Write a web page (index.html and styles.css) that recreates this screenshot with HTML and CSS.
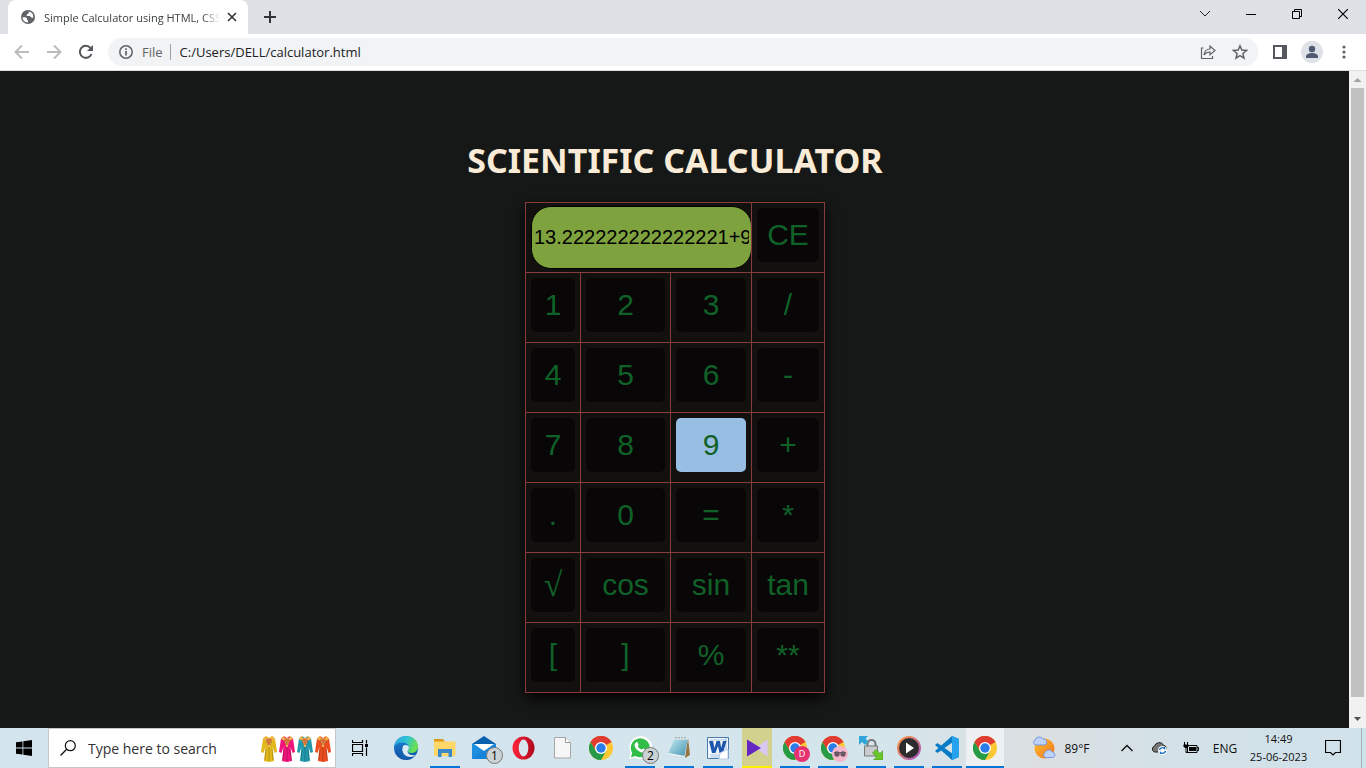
FILE: index.html
```html
<!DOCTYPE html>
<html lang="en">
<head>
<meta charset="utf-8">
<title>Simple Calculator using HTML, CSS</title>
<link rel="stylesheet" href="styles.css">
</head>
<body>
<svg class="defs" aria-hidden="true">
  <defs>
    <linearGradient id="edgeA" x1="0" y1="0" x2="1" y2="0.3"><stop offset="0" stop-color="#2aa4e4"/><stop offset="0.55" stop-color="#2fc3d0"/><stop offset="1" stop-color="#6be04e"/></linearGradient>
    <linearGradient id="edgeB" x1="0" y1="0" x2="0" y2="1"><stop offset="0" stop-color="#1b8ee0"/><stop offset="1" stop-color="#114a9c"/></linearGradient>
    <linearGradient id="ring" x1="0" y1="0" x2="1" y2="1"><stop offset="0" stop-color="#ff9838"/><stop offset="1" stop-color="#a352c8"/></linearGradient>
    <linearGradient id="opera" x1="0" y1="0" x2="1" y2="0"><stop offset="0" stop-color="#ff2338"/><stop offset="1" stop-color="#ad0b1c"/></linearGradient>
    <linearGradient id="sun" x1="0" y1="0" x2="1" y2="1"><stop offset="0" stop-color="#ffc12e"/><stop offset="1" stop-color="#f0701c"/></linearGradient>
    <linearGradient id="note" x1="0" y1="0" x2="1" y2="1"><stop offset="0" stop-color="#c9eef6"/><stop offset="1" stop-color="#3f8fae"/></linearGradient>
    <symbol id="chrome" viewBox="0 0 24 24">
      <circle cx="12" cy="12" r="12" fill="#fcc934"/>
      <path d="M12 12L1.6 6A12 12 0 0 1 22.4 6z" fill="#e03c31"/>
      <path d="M12 6h10.4A12 12 0 0 0 1.6 6L7 15z" fill="#e03c31"/>
      <path d="M1.6 6A12 12 0 0 0 12 24l5.2-9L12 17 6.8 15z" fill="#259b48"/>
      <circle cx="12" cy="12" r="6" fill="#fff"/><circle cx="12" cy="12" r="4.7" fill="#2b7de9"/>
    </symbol>
    <symbol id="coat" viewBox="0 0 18 27">
      <path d="M6 1L3 3.500 1 17l2.500 1 2-6L4 26l5 1 5-1-1.500-14 2 6 2.500-1L15 3.500 12 1l-3 2z"/>
      <path d="M9 3v23M6 14l-1 11M12 14l1 11" stroke="#0003" fill="none"/>
      <path d="M6 1L3.500 4l2.500 1zM12 1l2.500 3-2.500 1zM6 3l3 9 3-9" stroke="#f5bb54" stroke-width="1" fill="#e8983e"/>
      <path d="M6 5h6M6 7h6M7 9h4" stroke="#b75436" stroke-width="1"/>
    </symbol>
  </defs>
</svg>
<div class="screen">
  <header class="tabstrip">
    <div class="tab">
      <svg class="favicon" viewBox="0 0 14 14"><circle cx="7" cy="7" r="7" fill="#5f6368"/><path d="M1.5 7.2h3l1.6 1.3v1.3l1 .9-.3 1.7C3.500 12.500 1.500 10 1.500 7.200zM6.200 1.500l1.500.5v1.300L6 4.300 5.600 6h3.200l1.500 1.500 1.900.3c.8-3.400-1.700-6.300-6-6.300z" fill="#fff"/></svg>
      <span class="tab-title">Simple Calculator using HTML, CSS</span>
      <button class="icon-btn tab-close" aria-label="Close tab"><svg width="10" height="10" viewBox="0 0 10 10"><path d="M1 1l8 8M9 1L1 9" stroke="#303338" stroke-width="1.600"/></svg></button>
    </div>
    <button class="icon-btn new-tab" aria-label="New tab"><svg width="12" height="12" viewBox="0 0 12 12"><path d="M6 0v12M0 6h12" stroke="#303338" stroke-width="2"/></svg></button>
    <div class="window-controls">
      <button class="icon-btn" aria-label="Search tabs"><svg width="12" height="12" viewBox="0 0 12 12"><path d="M1 3l5 5 5-5" fill="none" stroke="#222"/></svg></button>
      <button class="icon-btn" aria-label="Minimize"><svg width="10" height="10" viewBox="0 0 10 10"><path d="M0 5.500h10" stroke="#000"/></svg></button>
      <button class="icon-btn" aria-label="Restore"><svg width="10" height="10" viewBox="0 0 10 10"><path d="M.5 2.500h7v7h-7zM2.500 2.500v-2h7v7h-2" fill="none" stroke="#000"/></svg></button>
      <button class="icon-btn" aria-label="Close"><svg width="10" height="10" viewBox="0 0 10 10"><path d="M0 0l10 10M10 0L0 10" stroke="#000" stroke-width="1.200"/></svg></button>
    </div>
  </header>
  <nav class="toolbar">
    <button class="icon-btn nav-btn" aria-label="Back"><svg width="16" height="16" viewBox="0 0 16 16"><path d="M15 8H2M8 1.500L1.500 8 8 14.500" fill="none" stroke="#babcbe" stroke-width="2"/></svg></button>
    <button class="icon-btn nav-btn" aria-label="Forward"><svg width="16" height="16" viewBox="0 0 16 16"><path d="M1 8h13M8 1.500L14.500 8 8 14.500" fill="none" stroke="#babcbe" stroke-width="2"/></svg></button>
    <button class="icon-btn nav-btn" aria-label="Reload"><svg width="16" height="16" viewBox="0 0 16 16"><path d="M13.500 10A6 6 0 1 1 12.500 4" fill="none" stroke="#55595e" stroke-width="2"/><path d="M15 1v6H9z" fill="#55595e"/></svg></button>
    <div class="omnibox">
      <svg width="14" height="14" viewBox="0 0 14 14"><circle cx="7" cy="7" r="6.200" fill="none" stroke="#5f6368" stroke-width="1.500"/><path d="M7 6v4.500M7 3.200v1.700" stroke="#5f6368" stroke-width="1.700"/></svg>
      <span class="scheme">File</span>
      <input class="address" type="text" aria-label="Address" value="C:/Users/DELL/calculator.html">
      <button class="icon-btn omni-btn" aria-label="Share"><svg width="16" height="16" viewBox="0 0 16 16"><path d="M3.500 4H1.500v10.500h11V12M4 11c.5-4 2.500-6 6-6V2l5 4.500-5 4.300V8c-3 0-4.500.8-6 3z" fill="none" stroke="#5f6368" stroke-width="1.200"/></svg></button>
      <button class="icon-btn omni-btn" aria-label="Bookmark"><svg width="16" height="16" viewBox="0 0 16 16"><path d="M8 1.800l1.800 4.300 4.700.4-3.600 3 1.100 4.600L8 11.700l-4 2.400 1.100-4.600-3.600-3 4.700-.4z" fill="none" stroke="#5f6368" stroke-width="1.500"/></svg></button>
    </div>
    <button class="icon-btn side-btn" aria-label="Side panel"><svg width="14" height="14" viewBox="0 0 14 14"><path d="M1 1h12v12H1z" fill="none" stroke="#55595e" stroke-width="2"/><path d="M9 0h5v14H9z" fill="#55595e"/></svg></button>
    <button class="icon-btn side-btn" aria-label="Profile"><svg width="22" height="22" viewBox="0 0 22 22"><circle cx="11" cy="11" r="11" fill="#dee1e6"/><circle cx="11" cy="8" r="3.200" fill="#4f5b70"/><path d="M5 17v-1.500c0-2.300 3-3.500 6-3.500s6 1.200 6 3.500V17z" fill="#4f5b70"/></svg></button>
    <button class="icon-btn side-btn" aria-label="Menu"><svg width="4" height="14" viewBox="0 0 4 14"><g fill="#5f6368"><circle cx="2" cy="2" r="1.600"/><circle cx="2" cy="7" r="1.600"/><circle cx="2" cy="12" r="1.600"/></g></svg></button>
  </nav>
  <div class="viewport">
    <main class="page">
      <h1>SCIENTIFIC CALCULATOR</h1>
      <table class="calculator">
        <colgroup><col class="c1"><col class="c2"><col class="c3"><col class="c4"></colgroup>
        <tbody>
        <tr><td colspan="3" class="display-cell"><input class="display" type="text" aria-label="Result" value="13.222222222222221+9"></td><td><button class="key">CE</button></td></tr>
        <tr><td><button class="key">1</button></td><td><button class="key">2</button></td><td><button class="key">3</button></td><td><button class="key">/</button></td></tr>
        <tr><td><button class="key">4</button></td><td><button class="key">5</button></td><td><button class="key">6</button></td><td><button class="key">-</button></td></tr>
        <tr><td><button class="key">7</button></td><td><button class="key">8</button></td><td><button class="key active">9</button></td><td><button class="key">+</button></td></tr>
        <tr><td><button class="key">.</button></td><td><button class="key">0</button></td><td><button class="key">=</button></td><td><button class="key">*</button></td></tr>
        <tr><td><button class="key root">√</button></td><td><button class="key">cos</button></td><td><button class="key">sin</button></td><td><button class="key">tan</button></td></tr>
        <tr><td><button class="key">[</button></td><td><button class="key">]</button></td><td><button class="key">%</button></td><td><button class="key">**</button></td></tr>
        </tbody>
      </table>
    </main>
    <div class="scrollbar" aria-hidden="true">
      <svg class="arrow" viewBox="0 0 17 17"><path d="M4.500 11L8.500 7l4 4z" fill="#a3a3a3"/></svg>
      <div class="thumb"></div>
      <svg class="arrow" viewBox="0 0 17 17"><path d="M5 6l3.500 4L12 6z" fill="#505050"/></svg>
    </div>
  </div>
  <footer class="taskbar">
    <button class="icon-btn start" aria-label="Start"><svg width="16" height="16" viewBox="0 0 16 16"><path d="M0 2.300L6.500 1.400v6.100H0zM7.300 1.300L16 0v7.500H7.300zM0 8.400h6.500v6.200L0 13.700zM7.300 8.400H16V16l-8.700-1.200z"/></svg></button>
    <label class="search">
      <svg width="16" height="16" viewBox="0 0 16 16"><circle cx="10.300" cy="5.700" r="5" fill="none" stroke="#111" stroke-width="1.200"/><path d="M6.700 9.300L.5 15.500" stroke="#111" stroke-width="1.300"/></svg>
      <input type="text" aria-label="Search" placeholder="Type here to search">
      <svg width="72" height="27" viewBox="0 0 72 27"><use href="#coat" width="18" height="27" fill="#e2b91c"/><use href="#coat" x="18" width="18" height="27" fill="#f0147c"/><use href="#coat" x="36" width="18" height="27" fill="#2298ac"/><use href="#coat" x="54" width="18" height="27" fill="#ec4d1e"/></svg>
    </label>
    <button class="icon-btn start" aria-label="Task view"><svg width="16" height="16" viewBox="0 0 16 16"><path d="M.5 0v2.500h10V0M.5 16v-2.500h10V16M.5 4.500h10v7H.5zM14.500 0v3.500M14.500 7.500V16" fill="none" stroke="#000" stroke-width="1.200"/><path d="M13 4h3v3h-3z"/></svg></button>
    <div class="apps">
      <button class="app" aria-label="Edge"><svg viewBox="0 0 24 24"><circle cx="12" cy="12" r="12" fill="url(#edgeB)"/><path d="M.2 11C1 4.500 6 0 12 0c7 0 12 5 12 10.500 0 4-3 6.500-6.500 6.500-2.500 0-4-1-4-2 0-.8 1.500-1.500 1.500-3.500C15 8.500 12 6.500 8 6.500 4 6.500 1.200 8.500.2 11z" fill="url(#edgeA)"/><path d="M9 10c-3 5 1.500 11.500 8 11 2-.2 3.500-1 4.800-2.200-3 .9-8 .2-8.300-3.800 0-.8 1.500-1.500 1.500-3.500 0-2.500-4-3.500-6-1.500z" fill="#dbebf3"/><path d="M9 10c-2.500 5 1 13 10 11.800C16 24 10 24.500 7 21 4 18 5 12 9 10z" fill="#1362b2"/></svg></button>
      <button class="app run" aria-label="File Explorer"><svg viewBox="0 0 24 24"><path d="M1 3h9l2 3h-11z" fill="#dd9918"/><path d="M1 5.500h21.500V20H1z" fill="#ffd768"/><path d="M5 21v-8h14v8h-3.500v-4h-7v4z" fill="#3988cb"/></svg></button>
      <button class="app" aria-label="Mail"><svg viewBox="0 0 24 24"><path d="M0 8L12 0l12 8z" fill="#0861ae"/><path d="M0 8h24v15H0z" fill="#1684d8"/><path d="M0 23l12-10V8L0 8z" fill="#30a3ea" opacity=".3"/><path d="M2 8h20l-10 7z" fill="#fff"/></svg><span class="badge">1</span></button>
      <button class="app" aria-label="Opera"><svg viewBox="0 0 24 24"><ellipse cx="12.500" cy="12" rx="11" ry="11.500" fill="url(#opera)"/><ellipse cx="12.500" cy="12" rx="4.800" ry="8.500" fill="#d8e7ee"/></svg></button>
      <button class="app" aria-label="Document"><svg viewBox="0 0 24 24"><path d="M4.500 1.500h11l5 5v15.500h-16z" fill="#f6f6f6" stroke="#a6a6a6"/><path d="M15.500 1.500v5h5" fill="#fff" stroke="#999"/></svg></button>
      <button class="app" aria-label="Chrome"><svg><use href="#chrome"/></svg></button>
      <button class="app run" aria-label="WhatsApp"><svg viewBox="0 0 24 24"><path d="M1 23l1.700-6A11.500 11.500 0 1 1 7 21.500z" fill="#fff"/><path d="M3 21.200l1.200-4.500A9.500 9.500 0 1 1 7.600 20z" fill="#31bd47"/><path d="M8 6.500c1-1 1.700-.3 2.500 2 .3.800-.7 1.500-.5 2 .7 1.500 2 2.500 3.500 3.100.5.200 1-1.300 1.700-1 2.300 1 2.800 1.200 2.300 2.500-.7 1.500-2.500 2-4.500 1.200-3.500-1.300-6-4-6.500-6.700-.1-1 .4-2.200 1.500-3.100z" fill="#fff"/></svg><span class="badge">2</span></button>
      <button class="app run" aria-label="Notepad"><svg viewBox="0 0 24 24"><path d="M21 2l2 17-5 3z" fill="#967542"/><path d="M8 2h13l-4 20L.5 19z" fill="url(#note)"/><path d="M8 2h13l-.5 1.500h-13z" fill="#eee"/><path d="M9 1v1.500M12 1v1.500M15 1v1.500M18 1v1.500" stroke="#6b7d83"/><path d="M.5 19L17 22l1-2L1.500 17z" fill="#e7eff1"/></svg></button>
      <button class="app run" aria-label="Word"><svg viewBox="0 0 24 24"><path d="M1.500 1.500h21v21h-21z" fill="#f3f8fd" stroke="#4a78ab"/><path d="M4 4h17M4 19h15M4 21h15M20 2v20" stroke="#a7c4e1"/><path d="M3 5l3 12h3.500L12 10l1.500 7H17L20.500 5H17l-1.800 7L14 5h-3.500L8.500 12 7 5z" fill="#1d56ad"/><path d="M14 17l8-4v10h-9z" fill="#fff" stroke="#b7cbe1"/></svg></button>
      <button class="app attention" aria-label="KMPlayer"><svg viewBox="0 0 24 24"><path d="M22.500 3.500v17L11 12z" fill="#d8c8f3"/><path d="M2 3.500v17L16 12z" fill="#6427bf"/></svg></button>
      <button class="app run narrow" aria-label="Chrome profile D"><svg><use href="#chrome"/></svg><span class="profile">D</span></button>
      <button class="app run narrow" aria-label="Chrome profile"><svg><use href="#chrome"/></svg><span class="profile pink"><svg viewBox="0 0 14 14"><circle cx="4" cy="7" r="2.700" fill="#695863"/><circle cx="10" cy="7" r="2.700" fill="#695863"/><path d="M1 5.500h12" stroke="#695863"/></svg></span></button>
      <button class="app run narrow" aria-label="WinSCP"><svg viewBox="0 0 24 24"><path d="M8.500 11V8a4 4 0 0 1 8 0v3" fill="none" stroke="#777" stroke-width="2"/><path d="M5.500 10h13v10h-13z" fill="#c9cbcd" stroke="#777"/><path d="M0 0h9L6.500 2.500l3 3-3.500 3.500-3-3L0 9z" fill="#31a6da"/><path d="M24 24h-9.500l3-3-4-4 3.500-3.500 4 4 3-3z" fill="#6cc72a" stroke="#438e16" stroke-width=".6"/></svg></button>
      <button class="app run narrow" aria-label="Media player"><svg viewBox="0 0 24 24"><circle cx="12" cy="12" r="11" fill="#2c2c2e" stroke="url(#ring)" stroke-width="2"/><path d="M9 6.500v11l8-5.500z" fill="#fff"/></svg></button>
      <button class="app run narrow" aria-label="VS Code"><svg viewBox="0 0 24 24"><path d="M17 0l7 3v18l-7 3L0 9l2.500-2L18 18V6L2.500 17 0 15z" fill="#087cc6"/><path d="M17 0l7 3v18l-7 3z" fill="#27a2ee"/></svg></button>
      <button class="app run narrow current" aria-label="Chrome window"><svg><use href="#chrome"/></svg></button>
    </div>
    <div class="tray">
      <button class="icon-btn weather"><svg width="24" height="24" viewBox="0 0 24 24"><circle cx="12.500" cy="12.500" r="10" fill="url(#sun)"/><path d="M3 9a3 3 0 0 1 0-5 4.500 4.500 0 0 1 8-1 3.200 3.200 0 0 1 2 6zM13 21.500a3 3 0 0 1 0-5 4.200 4.200 0 0 1 7.500-.5 3 3 0 0 1 1 5.500z" fill="#bcd2f8" stroke="#7797df"/></svg><span>89°F</span></button>
      <button class="icon-btn tray-btn" aria-label="Hidden icons"><svg width="12" height="8" viewBox="0 0 12 8"><path d="M.5 7L6 1.500 11.500 7" fill="none" stroke="#111" stroke-width="1.400"/></svg></button>
      <button class="icon-btn tray-btn" aria-label="OneDrive"><svg width="16" height="14" viewBox="0 0 16 14"><path d="M3.500 11a3.200 3.200 0 0 1 0-6A5 5 0 0 1 12.500 4 3.700 3.700 0 0 1 13 11z" fill="#777" stroke="#222"/><circle cx="11.500" cy="9.500" r="4.500" fill="#fff"/><path d="M8.500 9a3 3 0 0 1 5-1.500V6M14.500 10a3 3 0 0 1-5 1.500V13" fill="none" stroke="#1670c5" stroke-width="1.300"/></svg></button>
      <button class="icon-btn tray-btn" aria-label="Battery"><svg width="16" height="12" viewBox="0 0 16 12"><path d="M4.500 3.500H14v7H4.500zM14 5.500h1.500v3H14M1.500 0v3M4.500 0v3M3 6v4.500h2" fill="none" stroke="#000"/><path d="M6 5h7v4H6z"/><path d="M.5 2.500h5v2L4 6H2L.5 4.500z"/></svg></button>
      <button class="icon-btn lang">ENG</button>
      <button class="icon-btn clock"><span>14:49</span><span>25-06-2023</span></button>
      <button class="icon-btn notify" aria-label="Notifications"><svg width="16" height="16" viewBox="0 0 16 16"><path d="M.5.500h15v12h-5L8 15l-2.500-2.500h-5z" fill="none" stroke="#000" stroke-width="1.200"/></svg></button>
    </div>
  </footer>
</div>
</body>
</html>
```
FILE: styles.css
```css
* { box-sizing: border-box; }
body { margin: 0; font-family: "Open Sans", "Noto Sans", sans-serif; font-size: 12px; overflow: hidden; }
button, input { font: inherit; }
svg { display: block; flex: none; }
.defs { position: absolute; width: 0; height: 0; }
.screen { display: flex; flex-direction: column; height: 100vh; }
.icon-btn { display: flex; align-items: center; justify-content: center; padding: 0; border: 0; background: none; color: #111; }

.tabstrip { display: flex; height: 34px; flex: none; padding-left: 8px; background: #dee1e6; }
.tab { display: flex; align-items: center; width: 240px; padding: 0 8px 0 13px; background: #fff; border-radius: 8px 8px 0 0; color: #3c4043; }
.favicon { width: 14px; height: 14px; }
.tab-title { flex: 1; min-width: 0; margin-left: 9px; overflow: hidden; white-space: nowrap; font-size: 11px; -webkit-mask-image: linear-gradient(90deg, #000 90%, transparent); mask-image: linear-gradient(90deg, #000 90%, transparent); }
.tab-close { width: 16px; height: 16px; margin-left: 4px; }
.new-tab { width: 44px; }
.window-controls { display: flex; height: 28px; margin-left: auto; }
.window-controls .icon-btn { width: 46px; }

.toolbar { display: flex; align-items: center; height: 37px; flex: none; padding: 0 6px; background: #fff; border-bottom: 1px solid #dcdfe1; }
.nav-btn, .side-btn { width: 32px; height: 32px; }
.omnibox { display: flex; align-items: center; flex: 1; height: 28px; margin: 0 6px; padding: 0 2px 0 11px; background: #f1f3f4; border-radius: 14px; font-size: 13px; }
.scheme { margin-left: 9px; padding-right: 7px; border-right: 1px solid #9aa0a6; color: #5f6368; line-height: 16px; }
.address { flex: 1; min-width: 0; padding: 0 9px; border: 0; outline: 0; background: none; color: #202124; }
.omni-btn { width: 32px; height: 28px; }

.viewport { display: flex; flex: 1; min-height: 0; }
.page { flex: 1; padding: 69px 0 0 1px; background: #161817; overflow: hidden; }
h1 { margin: 0 0 22px; color: #faebd7; font-family: "Noto Sans", sans-serif; font-size: 34px; line-height: 40px; font-weight: 700; text-align: center; }
.calculator { width: 299px; margin: 0 auto; border-collapse: collapse; table-layout: fixed; background: #12110f; box-shadow: 0 5px 12px #000; }
.calculator td { height: 70px; padding: 5px; border: 1px solid #883c3c; vertical-align: top; }
.c1 { width: 55px; }
.c2 { width: 90px; }
.c3 { width: 81px; }
.c4 { width: 73px; }
.calculator .display-cell { padding: 3px 0 0 5px; }
.display { display: block; width: 221px; height: 63px; padding: 0 2px; border: 1px solid #000; border-radius: 20px; outline: 0; background: #7ea23e; color: #000; font: 20px "Liberation Sans", Arial, sans-serif; }
.key { display: block; width: 100%; height: 54px; padding: 0; border: 0; border-radius: 5px; background: #080607; color: #106128; font: 30px "Liberation Sans", Arial, sans-serif; text-align: center; }
.key.root { font-family: "Liberation Serif", serif; font-size: 34px; }
.key.active { background: #98bee4; }

.scrollbar { display: flex; flex-direction: column; width: 17px; background: #f1f1f1; }
.arrow { width: 17px; height: 17px; }
.thumb { flex: 1; margin: 0 2px 14px; background: #c1c1c1; }

.taskbar { display: flex; height: 40px; flex: none; background: linear-gradient(90deg, #d3e4ee 0%, #d5e5ec 65%, #dbdfe1 76%, #d4e1e7 84%, #cfe1ea 100%); }
.start { width: 48px; }
.search { display: flex; align-items: center; width: 288px; padding: 0 3px 0 11px; border: 1px solid #c5c8ca; background: #fff; }
.search input { flex: 1; min-width: 0; padding: 0 0 0 12px; border: 0; outline: 0; background: none; font-size: 14px; }
.search input::placeholder { color: #333; opacity: 1; }
.apps { display: flex; margin-left: 2px; }
.app { position: relative; display: flex; align-items: center; justify-content: center; width: 39px; padding: 0; border: 0; background: none; }
.app.narrow { width: 38px; }
.app > svg { width: 24px; height: 24px; }
.app.run { background: linear-gradient(#0876d6, #0876d6) center bottom / 30px 2px no-repeat; }
.app.current { background: linear-gradient(#0876d6, #0876d6) center bottom / 100% 2px no-repeat, #edf1f3; }
.app.attention { background: linear-gradient(#fff000, #fff000) center bottom / 30px 2px no-repeat, linear-gradient(#d2d28e, #d2d28e) center / 30px 100% no-repeat; }
.badge { position: absolute; right: 0; bottom: 4px; width: 17px; height: 17px; border: 1px solid #777; border-radius: 50%; background: #cbd2d6; font-size: 12px; line-height: 15px; color: #000; }
.profile { position: absolute; right: 4px; bottom: 6px; width: 16px; height: 16px; border-radius: 50%; background: #e63370; color: #fff; font-size: 9px; line-height: 16px; }
.profile.pink { background: #f6b6cb; padding: 1px; }

.tray { display: flex; margin-left: auto; padding-right: 4px; background: linear-gradient(#a8b4bb, #a8b4bb) calc(100% - 4px) center / 1px 100% no-repeat; }
.weather { width: 76px; gap: 8px; margin-right: 12px; }
.tray-btn { width: 32px; }
.lang { width: 36px; }
.clock { flex-direction: column; width: 71px; line-height: 18px; font-size: 11px; }
.notify { width: 38px; margin-right: 10px; }
```
